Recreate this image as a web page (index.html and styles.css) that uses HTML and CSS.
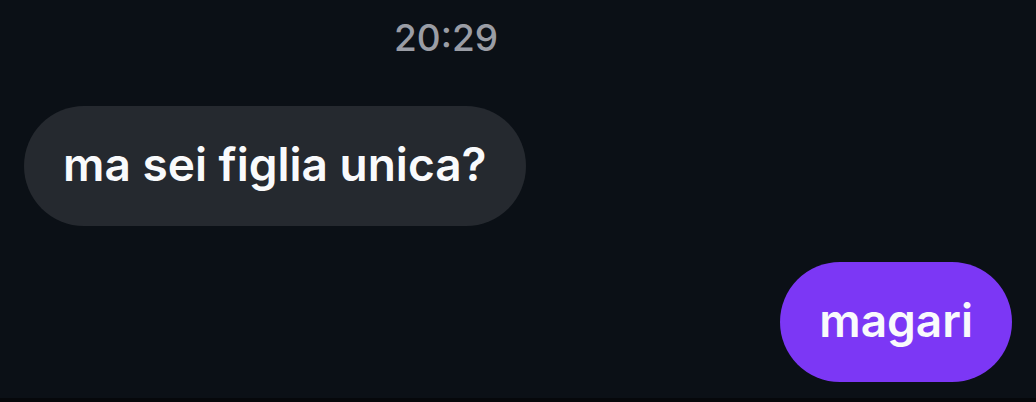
FILE: index.html
```html
<!DOCTYPE html>
<html lang="it">
<head>
<meta charset="utf-8">
<meta name="viewport" content="width=device-width, initial-scale=1">
<title>Chat</title>
<link rel="stylesheet" href="styles.css">
</head>
<body>
<main class="chat">
  <time class="timestamp" datetime="20:29">20:29</time>
  <p class="bubble received">ma sei figlia unica?</p>
  <p class="bubble sent">magari</p>
</main>
</body>
</html>
```

FILE: styles.css
```css
* {
  box-sizing: border-box;
}

body {
  margin: 0;
  background: #0b1016;
  font-family: Inter, "Liberation Sans", sans-serif;
}

.chat {
  display: flex;
  flex-direction: column;
  min-height: 100vh;
  padding: 16px 24px;
  border-bottom: 4px solid #06080b;
}

.timestamp {
  align-self: center;
  margin-right: 144px;
  margin-bottom: 46px;
  color: #9a9da5;
  font-size: 37px;
  font-weight: 500;
  line-height: 44px;
}

.bubble {
  margin: 0 0 36px;
  padding: 28px 39px 32px;
  border-radius: 60px;
  color: #f9fafc;
  font-size: 46px;
  font-weight: 600;
  line-height: 60px;
}

.received {
  align-self: flex-start;
  background: #25292f;
}

.sent {
  align-self: flex-end;
  margin-bottom: 0;
  background: #7c37f5;
}
```
